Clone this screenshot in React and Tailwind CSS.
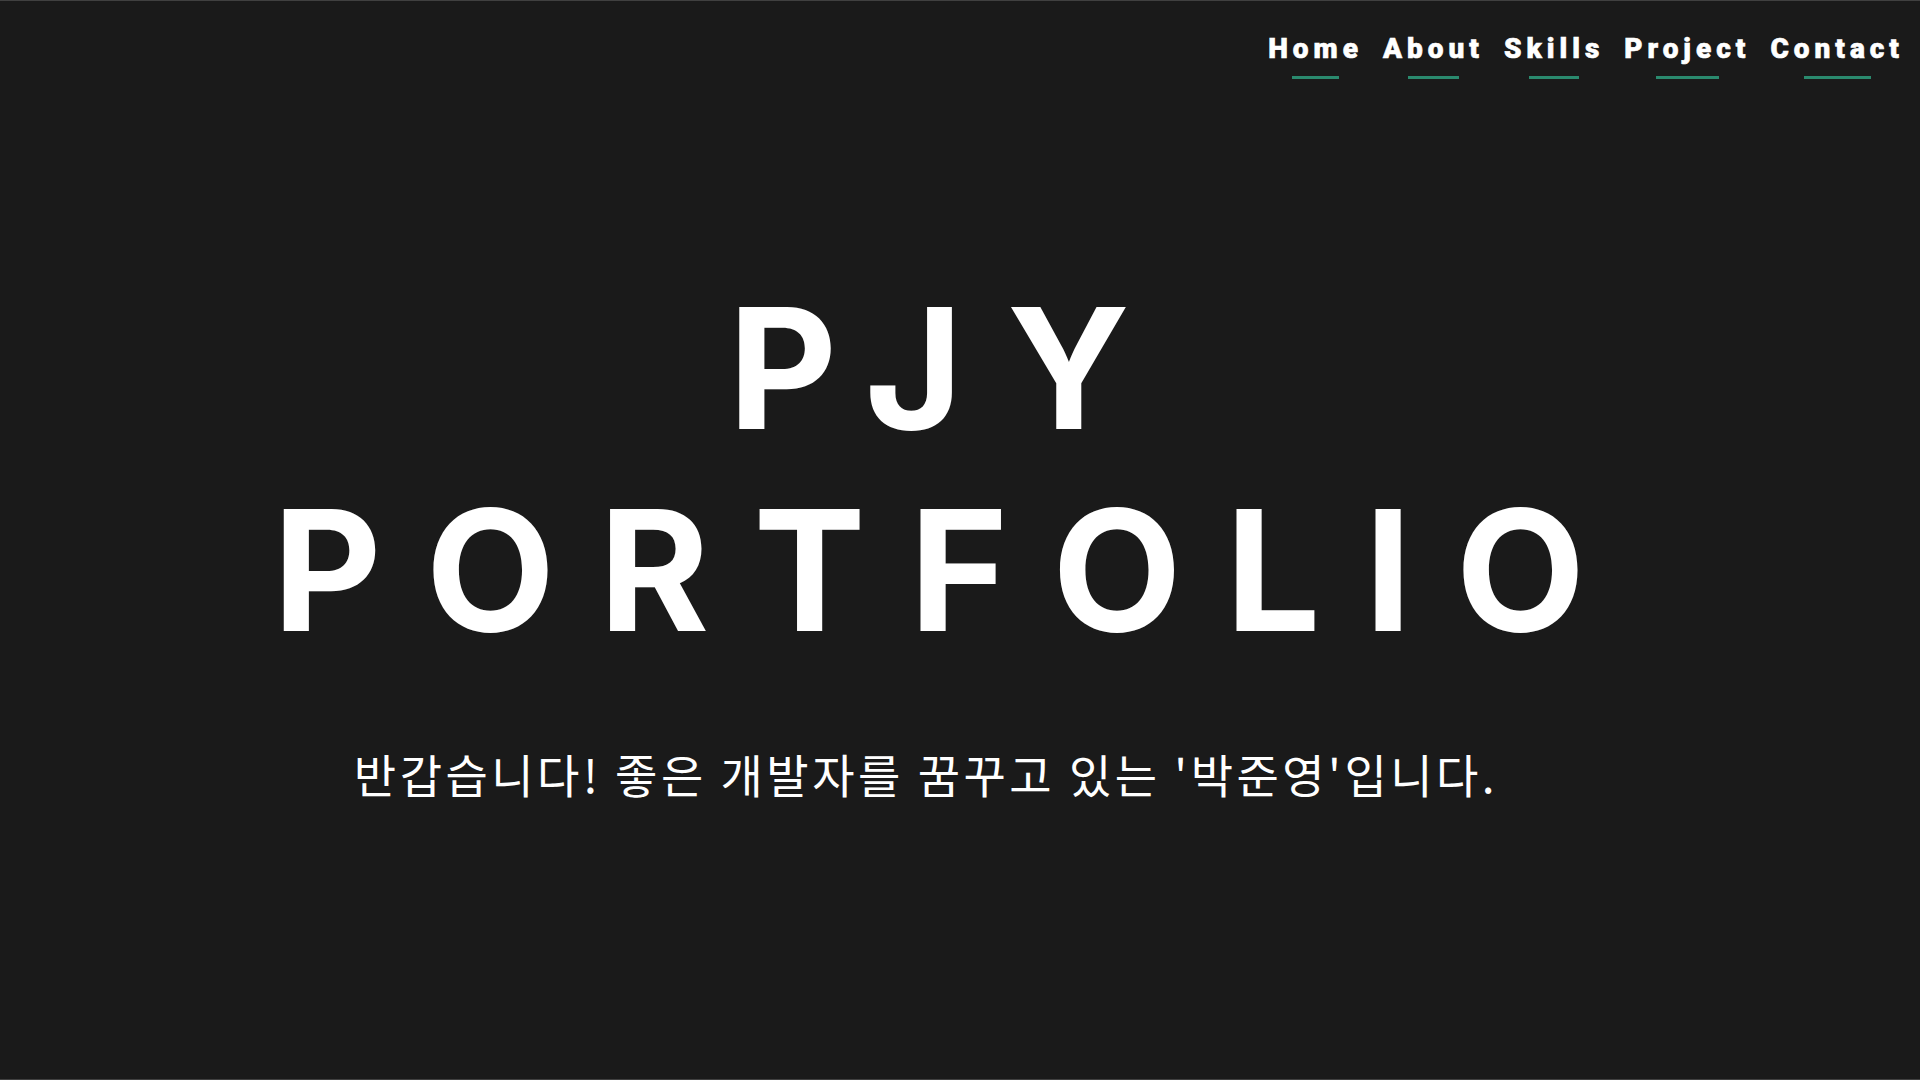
import React from 'react';

const NAV = ['Home', 'About', 'Skills', 'Project', 'Contact'];

// Single-screen portfolio hero: nav at top right, big spaced title, greeting line.
export default function App() {
  return (
    <div className="min-h-[1080px] w-full bg-[#1a1a1a] border-t border-b border-[#404040] flex flex-col">
      <header className="flex justify-end pt-[31px] pr-[16px]">
        <nav className="flex gap-[20px]">
          {NAV.map((item) => (
            <a
              key={item}
              href={`#${item.toLowerCase()}`}
              className="flex flex-col items-center text-white"
            >
              <span
                className="text-[28px] font-black tracking-[5px] leading-[33px] [-webkit-text-stroke:0.6px_#fff]"
                style={{ fontFamily: 'Roboto, "Liberation Sans", sans-serif' }}
              >
                {item}
              </span>
              <span className="mt-[11px] h-[3px] w-1/2 bg-[#2a8a6e]" />
            </a>
          ))}
        </nav>
      </header>

      <main className="flex flex-col items-center text-white">
        <h1
          className="mt-[188px] pr-[18px] text-center text-[168px] font-bold leading-[202px] tracking-[44px]"
          style={{ fontFamily: 'Inter, "Liberation Sans", sans-serif' }}
        >
          PJY
          <br />
          PORTFOLIO
        </h1>
        <p
          className="mt-[71px] pr-[68px] text-[46px] leading-[63px] tracking-[3.5px] font-normal"
          style={{ fontFamily: '"Noto Sans CJK KR", "Noto Sans", sans-serif' }}
        >
          반갑습니다! 좋은 개발자를 꿈꾸고 있는 '박준영'입니다.
        </p>
      </main>
    </div>
  );
}
